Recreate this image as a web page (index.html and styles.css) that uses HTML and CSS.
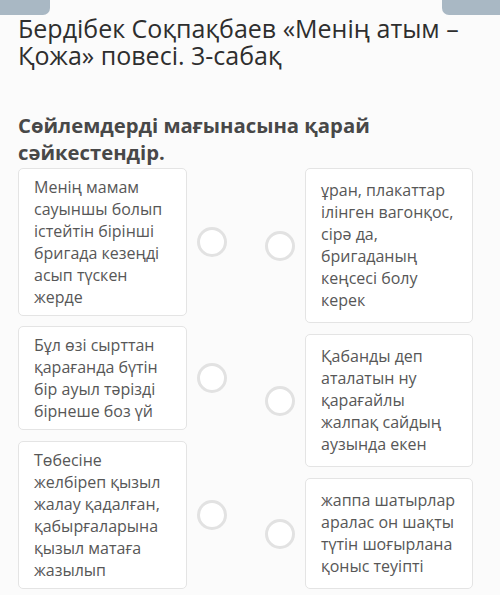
FILE: index.html
```html
<!DOCTYPE html>
<html lang="kk">
<head>
    <meta charset="UTF-8">
    <meta name="viewport" content="width=device-width, initial-scale=1.0">
    <title>Сабақ</title>
    <link rel="stylesheet" href="styles.css">
</head>
<body>
    <div class="top-tabs">
        <span class="tab tab-left"></span>
        <span class="tab tab-right"></span>
    </div>
    <div class="page">
        <h1 class="lesson-title">Бердібек Соқпақбаев «Менің атым – Қожа» повесі. 3-сабақ</h1>
        <h2 class="task">Сөйлемдерді мағынасына қарай сәйкестендір.</h2>
        <div class="match">
            <div class="match-col col-left">
                <div class="match-item">
                    <div class="card">Менің мамам сауыншы болып істейтін бірінші бригада кезеңді асып түскен жерде</div>
                    <span class="dot"></span>
                </div>
                <div class="match-item">
                    <div class="card">Бұл өзі сырттан қарағанда бүтін бір ауыл тәрізді бірнеше боз үй</div>
                    <span class="dot"></span>
                </div>
                <div class="match-item">
                    <div class="card">Төбесіне желбіреп қызыл жалау қадалған, қабырғаларына қызыл матаға жазылып</div>
                    <span class="dot"></span>
                </div>
            </div>
            <div class="match-col col-right">
                <div class="match-item">
                    <span class="dot"></span>
                    <div class="card">ұран, плакаттар ілінген вагонқос, сірә да, бригаданың кеңсесі болу керек</div>
                </div>
                <div class="match-item">
                    <span class="dot"></span>
                    <div class="card">Қабанды деп аталатын ну қарағайлы жалпақ сайдың аузында екен</div>
                </div>
                <div class="match-item">
                    <span class="dot"></span>
                    <div class="card">жаппа шатырлар аралас он шақты түтін шоғырлана қоныс теуіпті</div>
                </div>
            </div>
        </div>
    </div>
</body>
</html>
```

FILE: styles.css
```css
body {
    margin: 0;
    background: #fbfbfb;
    font-family: "Open Sans", "Noto Sans", sans-serif;
}
.top-tabs {
    display: flex;
    justify-content: space-between;
}
.tab {
    display: block;
    height: 15px;
    background: #a9b8c4;
}
.tab-left {
    width: 50px;
    border-bottom-right-radius: 7px;
}
.tab-right {
    width: 58px;
    border-bottom-left-radius: 7px;
}
.page {
    padding: 0 18px;
}
.lesson-title {
    margin: 0;
    font-size: 25px;
    font-weight: 400;
    line-height: 27px;
    color: #2e2e2e;
}
.task {
    margin: 43px 0 2px;
    font-size: 20.3px;
    font-weight: 700;
    line-height: 27px;
    color: #484848;
}
.match {
    display: flex;
    gap: 38px;
}
.match-col {
    display: flex;
    flex-direction: column;
    gap: 10px;
}
.match-item {
    display: flex;
    align-items: center;
    gap: 10px;
}
.card {
    box-sizing: border-box;
    width: 169px;
    padding: 7px 10px 7px 15px;
    background: #fff;
    border: 1px solid #e4e4e4;
    border-radius: 5px;
    font-size: 16px;
    line-height: 22px;
    color: #575757;
}
.col-left .match-item + .match-item + .match-item {
    margin-top: 1px;
}
.col-right .card {
    width: 168px;
    padding: 10px 10px 11px 15px;
}
.col-right .match-item + .match-item {
    margin-top: 1px;
}
.dot {
    box-sizing: border-box;
    width: 30px;
    height: 30px;
    border: 3px solid #e2e2e2;
    border-radius: 50%;
    background: #fff;
    flex-shrink: 0;
}
```
